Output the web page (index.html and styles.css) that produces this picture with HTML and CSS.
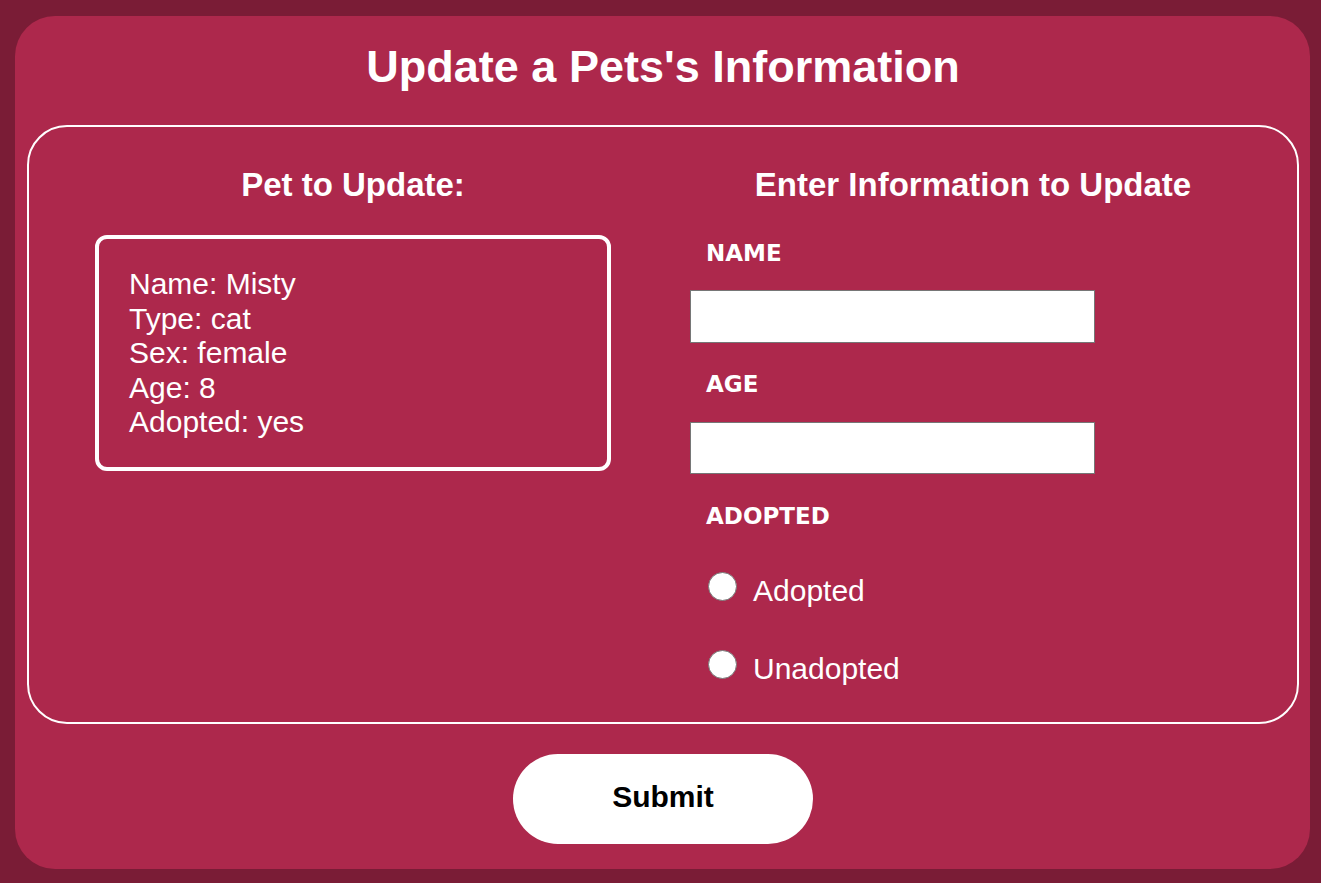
FILE: index.html
```html
<!DOCTYPE html>
<html lang="en">
<head>
<meta charset="utf-8">
<title>Update a Pet</title>
<link rel="stylesheet" href="styles.css">
</head>
<body>
<main class="card">
  <h1 class="title">Update a Pets's Information</h1>
  <form class="panel">
    <section class="col col-left">
      <h2 class="col-title">Pet to Update:</h2>
      <div class="pet-box">
        <div class="pet-line">Name: Misty</div>
        <div class="pet-line">Type: cat</div>
        <div class="pet-line">Sex: female</div>
        <div class="pet-line">Age: 8</div>
        <div class="pet-line">Adopted: yes</div>
      </div>
    </section>
    <section class="col col-right">
      <h2 class="col-title">Enter Information to Update</h2>
      <div class="fields">
        <label class="field-label label-name" for="name">NAME</label>
        <input class="text-input input-name" id="name" type="text">
        <label class="field-label label-age" for="age">AGE</label>
        <input class="text-input input-age" id="age" type="text">
        <div class="field-label label-adopted">ADOPTED</div>
        <label class="radio-row row-1"><input class="radio" type="radio" name="adopted" value="yes"><span>Adopted</span></label>
        <label class="radio-row row-2"><input class="radio" type="radio" name="adopted" value="no"><span>Unadopted</span></label>
      </div>
    </section>
  </form>
  <div class="actions">
    <button class="submit" type="button">Submit</button>
  </div>
</main>
</body>
</html>
```
FILE: styles.css
```css
* { box-sizing: border-box; }

html, body {
  margin: 0;
  padding: 0;
}

body {
  background: #7a1c36;
  font-family: "Liberation Sans", Arial, sans-serif;
  color: #ffffff;
  padding: 16px 11px 14px 15px;
}

.card {
  background: #ad284c;
  border-radius: 40px;
  padding: 25px 11px 25px 12px;
}

.title {
  margin: 0 0 32px;
  font-size: 45px;
  line-height: 52px;
  font-weight: bold;
  text-align: center;
}

.panel {
  display: grid;
  grid-template-columns: 1fr 1fr;
  border: 2px solid #ffffff;
  border-radius: 40px;
  padding: 0 14px 36px;
}

.col {
  display: flex;
  flex-direction: column;
  min-width: 0;
}

.col-left {
  align-items: center;
}

.col-title {
  margin: 39px 0 0;
  font-size: 33px;
  line-height: 38px;
  font-weight: bold;
  text-align: center;
  align-self: stretch;
}

.pet-box {
  margin-top: 31px;
  width: 516px;
  border: 4px solid #ffffff;
  border-radius: 12px;
  padding: 28px 30px 27px;
  font-size: 30px;
  line-height: 34.5px;
}

.fields {
  display: flex;
  flex-direction: column;
  align-items: flex-start;
  padding-left: 27px;
}

.field-label {
  display: block;
  font-family: "DejaVu Sans", Verdana, sans-serif;
  font-size: 23px;
  line-height: 26px;
  font-weight: bold;
  padding-left: 16px;
}

.label-name { margin-top: 36px; }
.label-age { margin-top: 28px; }
.label-adopted { margin-top: 29px; }

.text-input {
  display: block;
  width: 405px;
  height: 53px;
  margin: 24px 0 0;
  border: 1px solid #767676;
  background: #ffffff;
  font-size: 20px;
  padding: 0 8px;
  font-family: inherit;
}

.input-age { margin-top: 25px; height: 52px; }

.radio-row {
  display: flex;
  align-items: flex-start;
  font-size: 30px;
  line-height: 34px;
  padding-left: 18px;
}

.row-1 { margin-top: 45px; }
.row-2 { margin-top: 44px; }

.radio {
  appearance: none;
  -webkit-appearance: none;
  width: 29px;
  height: 29px;
  margin: -2px 16px 0 0;
  border: 1px solid #767676;
  border-radius: 50%;
  background: #ffffff;
  flex: 0 0 auto;
}

.actions {
  display: flex;
  justify-content: center;
  margin-top: 30px;
}

.submit {
  width: 300px;
  height: 90px;
  border: none;
  border-radius: 45px;
  background: #ffffff;
  color: #000000;
  font-family: "Liberation Sans", Arial, sans-serif;
  font-size: 30px;
  font-weight: bold;
  line-height: 30px;
  padding: 0 0 4px;
  cursor: pointer;
}
```
